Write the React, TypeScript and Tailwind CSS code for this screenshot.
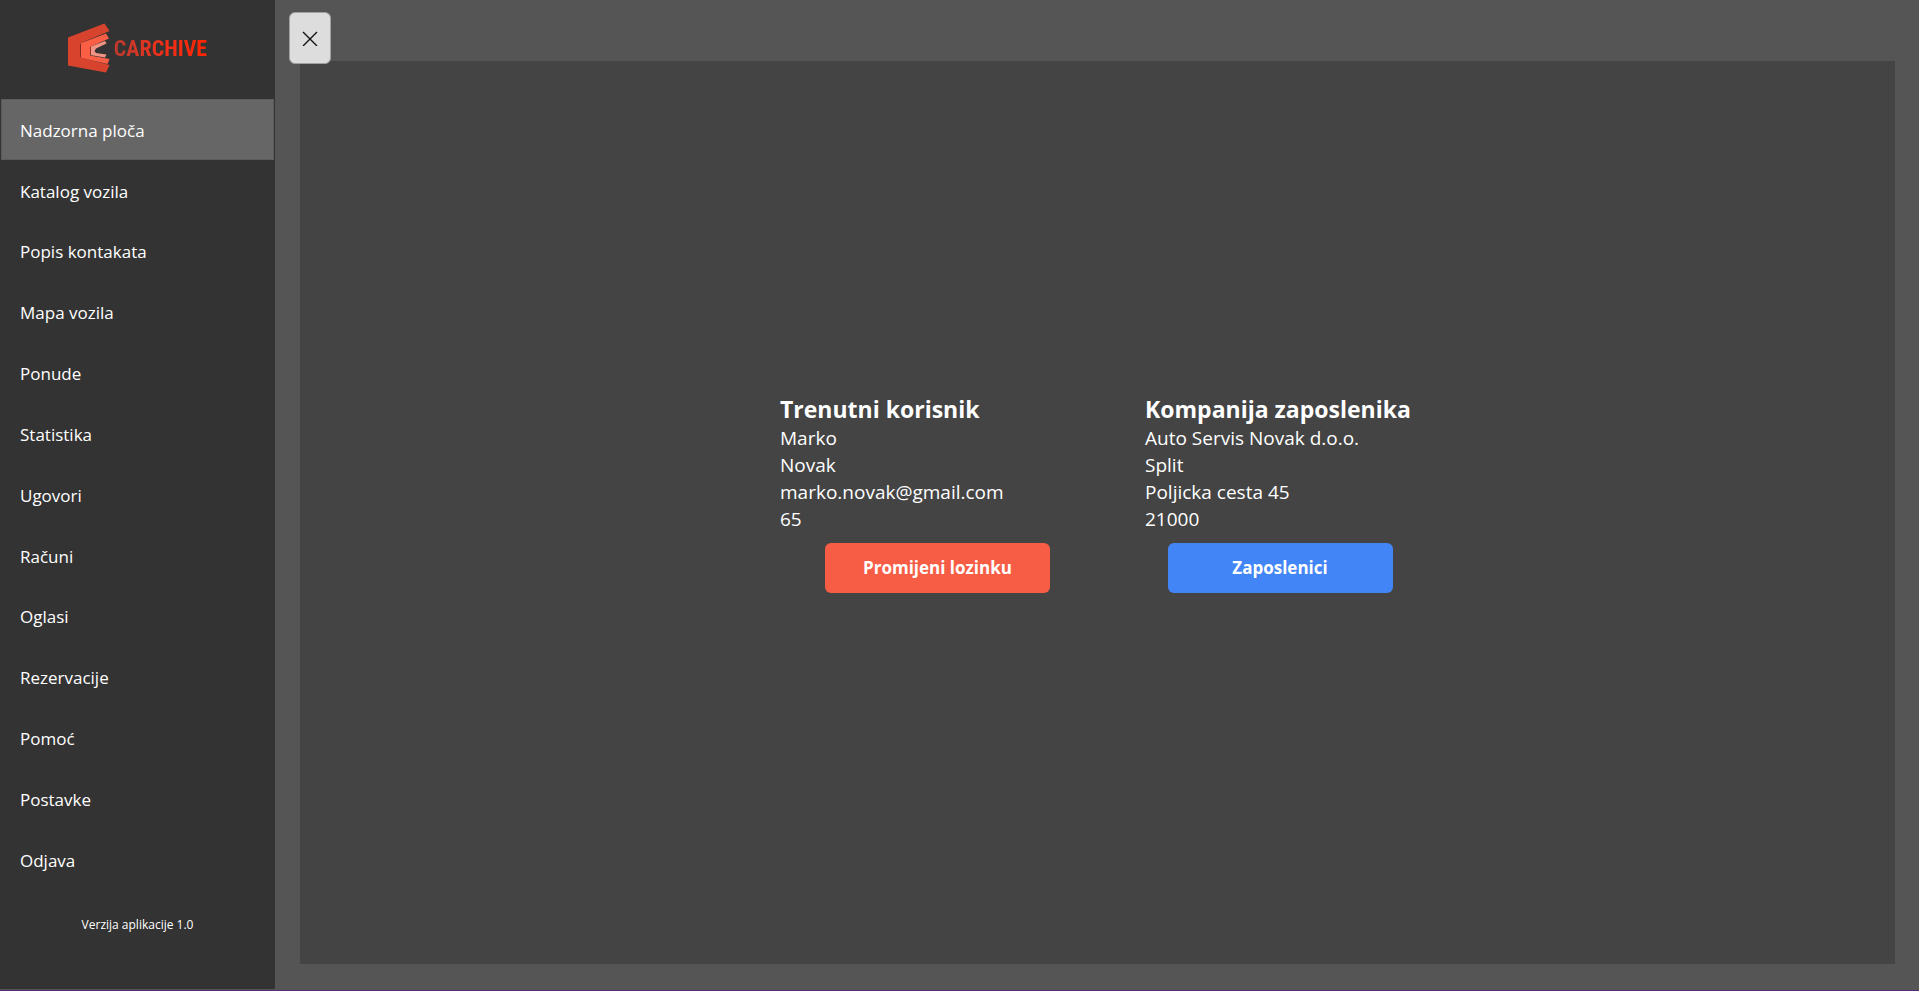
import { useState } from "react";

const navItems = [
  "Nadzorna ploča",
  "Katalog vozila",
  "Popis kontakata",
  "Mapa vozila",
  "Ponude",
  "Statistika",
  "Ugovori",
  "Računi",
  "Oglasi",
  "Rezervacije",
  "Pomoć",
  "Postavke",
  "Odjava",
];

function Logo() {
  return (
    <div className="flex items-center gap-1">
      <svg width="42" height="50" viewBox="0 0 42 50" aria-hidden="true">
        <path d="M0 14.5 36.5 .5 41.5 8 13 20V34.5L41.5 42 38 49.5 0 42.5Z" fill="#d8432d" />
        <path d="M12 20.5 38 10.5 41 15.5 22 24V32.5L41.5 36 39.5 41 12 34.5Z" fill="#fa5f45" />
        <path d="M12.5 20.5V34.5" stroke="#7d2d22" strokeWidth="1" />
        <path d="M22 24 37 18 38.5 20.5 28 25.5 26.5 28 28 30 38.5 31.5 37 34.5 22 32Z" fill="#f29484" />
        <path d="M22.5 24V32" stroke="#8f3427" strokeWidth="1" />
      </svg>
      <span className="bg-linear-to-r from-[#b93a2e] via-[#f0301a] to-[#ff2400] bg-clip-text pt-0.5 font-['Roboto_Condensed','Roboto',sans-serif] text-[22px] leading-8 font-bold text-transparent">
        CARCHIVE
      </span>
    </div>
  );
}

function Sidebar() {
  const [active, setActive] = useState(navItems[0]);
  return (
    <aside className="flex w-[275px] shrink-0 flex-col bg-[#333333]">
      <header className="flex h-[99px] items-start justify-center pt-[23px]">
        <Logo />
      </header>
      <nav className="flex flex-1 flex-col px-px">
        {navItems.map((item) => (
          <button
            key={item}
            type="button"
            onClick={() => setActive(item)}
            className={
              item === active
                ? "flex flex-1 items-center border border-[#5c5c5c] bg-[#666666] px-[18px] pt-0.5 text-left text-[17px]"
                : "flex flex-1 items-center border border-transparent px-[18px] pt-0.5 text-left text-[17px]"
            }
          >
            {item}
          </button>
        ))}
      </nav>
      <footer className="h-[99px] pt-[25px] text-center text-[12px] leading-5">Verzija aplikacije 1.0</footer>
    </aside>
  );
}

type InfoProps = { title: string; lines: string[]; action: string; className: string; buttonClass: string };

function InfoBlock({ title, lines, action, className, buttonClass }: InfoProps) {
  return (
    <section className={className}>
      <h2 className="text-[23px] leading-8 font-bold whitespace-nowrap">{title}</h2>
      {lines.map((line) => (
        <p key={line} className="text-[19px] leading-[27px]">
          {line}
        </p>
      ))}
      <button
        type="button"
        className={`mx-auto mt-2.5 block h-[50px] w-[225px] rounded-md text-[17px] font-bold ${buttonClass}`}
      >
        {action}
      </button>
    </section>
  );
}

export default function App() {
  return (
    <div className="flex min-h-screen border-b border-[#5a2a72] bg-[#555555] pb-px font-['Open_Sans','Noto_Sans',sans-serif] text-white">
      <Sidebar />
      <main className="relative flex flex-1 pt-[61px] pr-6 pb-[25px] pl-[25px]">
        <button
          type="button"
          aria-label="Zatvori izbornik"
          className="absolute top-3 left-3.5 flex h-[52px] w-[42px] items-center justify-center rounded-md border border-[#a0a0a0] bg-[#dddddd]"
        >
          <svg width="16" height="16" viewBox="0 0 16 16" fill="none" stroke="#111111" strokeWidth="1.4" aria-hidden="true">
            <path d="M1 2 15 16M15 2 1 16" />
          </svg>
        </button>
        <div className="flex flex-1 items-center justify-center gap-[50px] bg-[#444444] pb-10">
          <InfoBlock
            title="Trenutni korisnik"
            lines={["Marko", "Novak", "marko.novak@gmail.com", "65"]}
            action="Promijeni lozinku"
            className="w-[315px]"
            buttonClass="bg-[#f75c45]"
          />
          <InfoBlock
            title="Kompanija zaposlenika"
            lines={["Auto Servis Novak d.o.o.", "Split", "Poljicka cesta 45", "21000"]}
            action="Zaposlenici"
            className="w-[270px]"
            buttonClass="bg-[#4285f7]"
          />
        </div>
      </main>
    </div>
  );
}
